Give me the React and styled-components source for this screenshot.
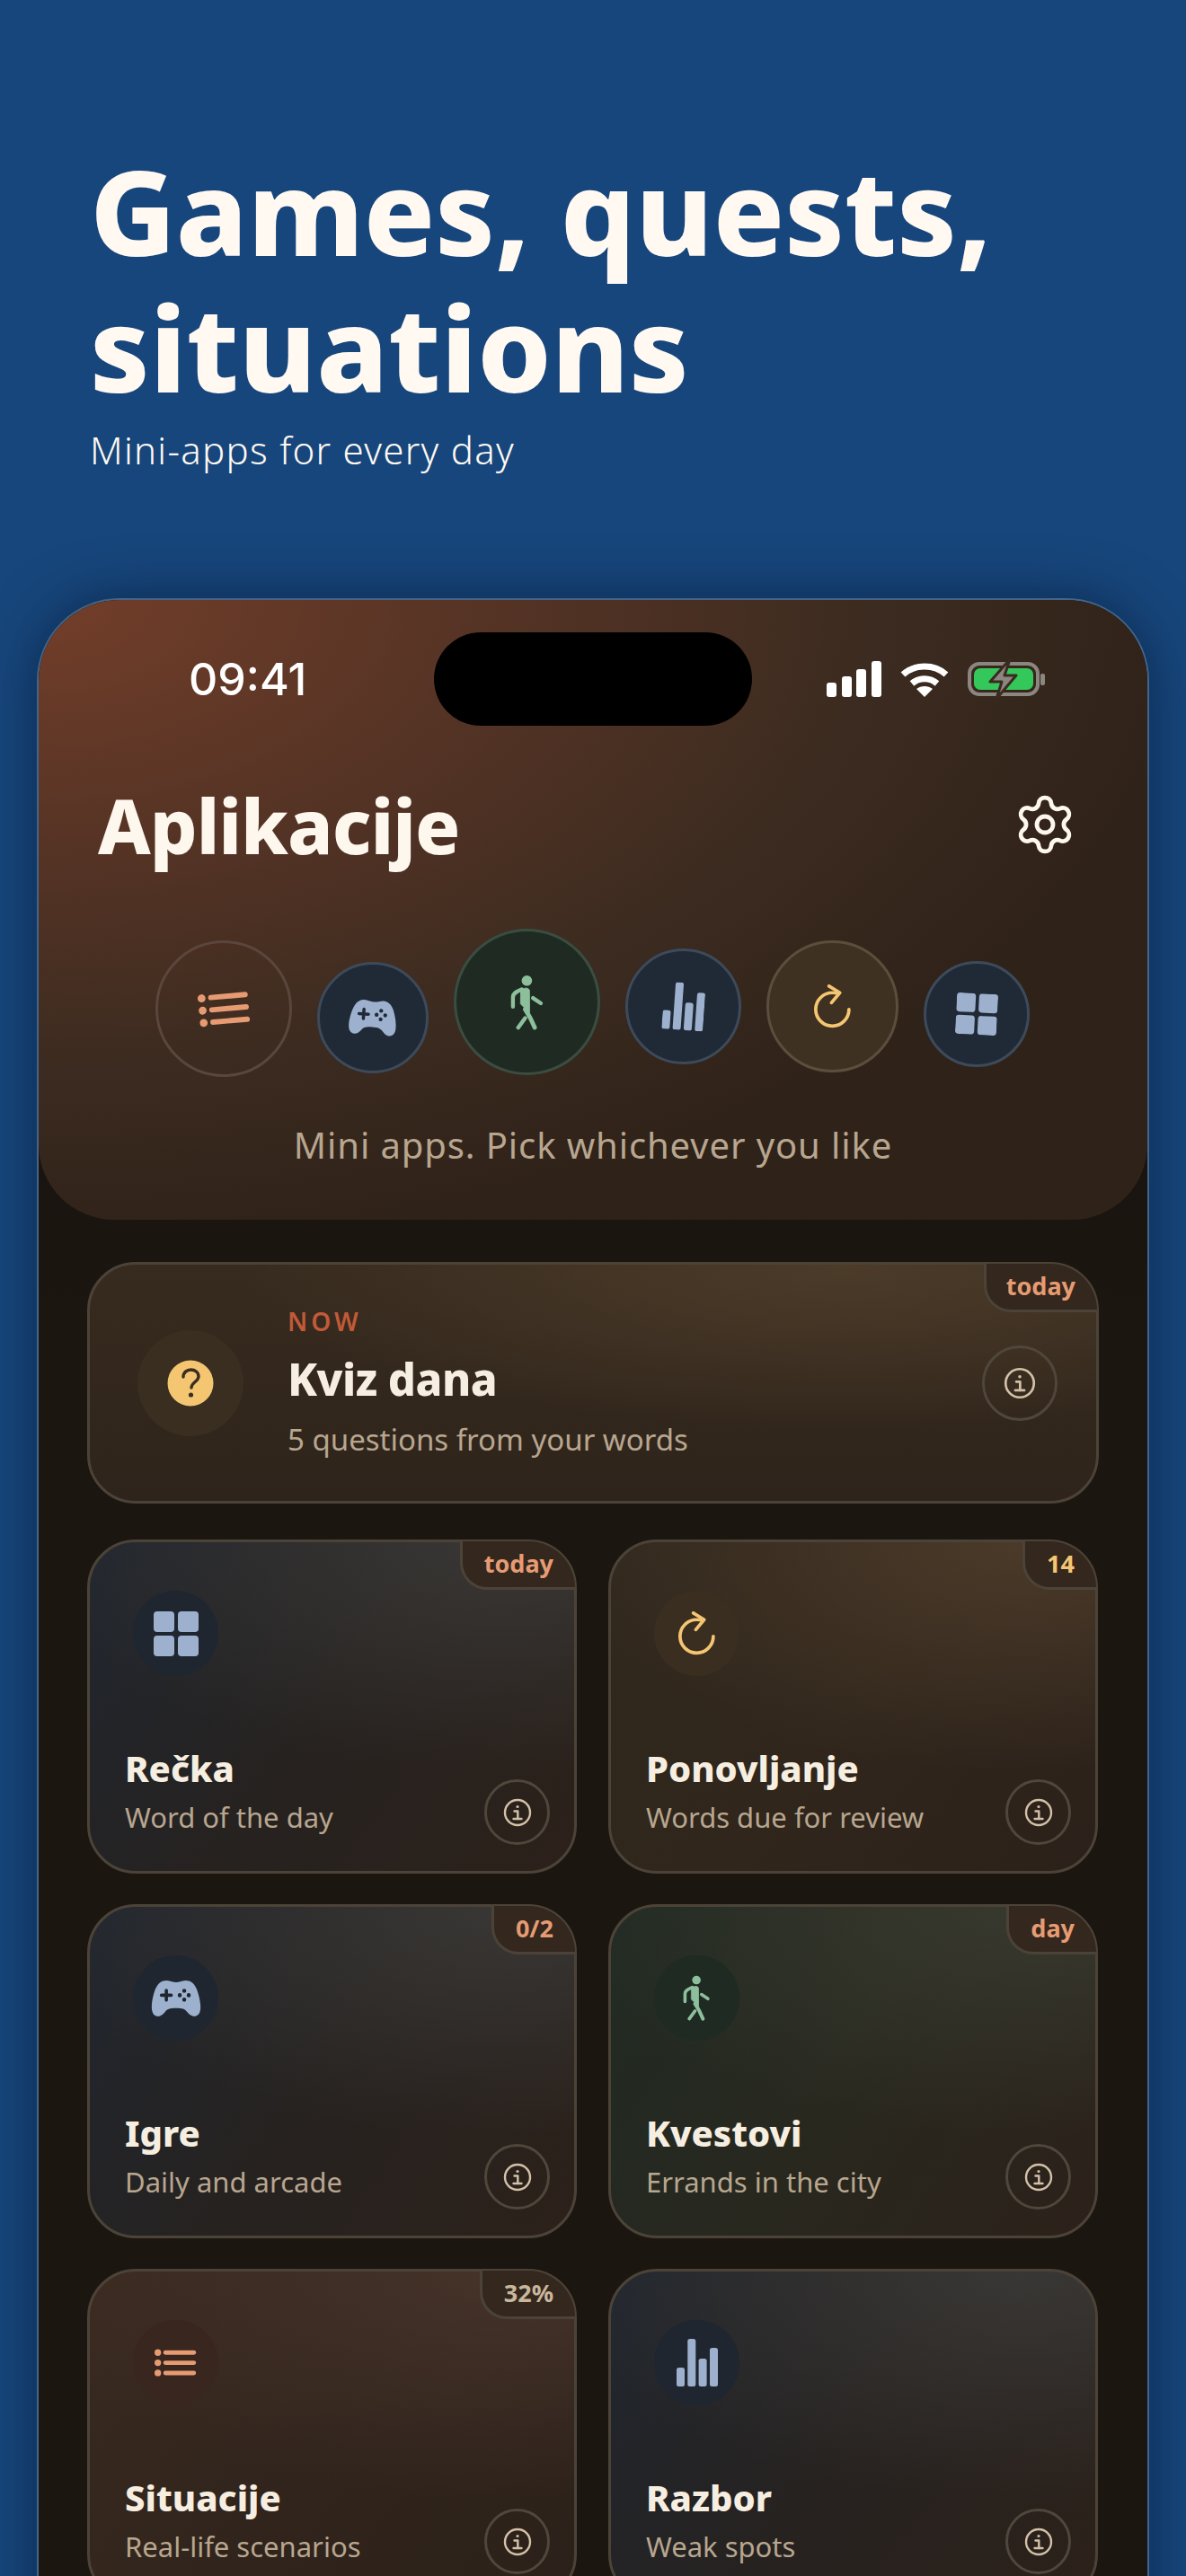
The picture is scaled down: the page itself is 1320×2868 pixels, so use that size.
import React from 'react';
import styled, { createGlobalStyle } from 'styled-components';
import { Settings } from 'lucide-react';
import { IoGameController } from 'react-icons/io5';

const FONT = `"Noto Sans", "Open Sans", sans-serif`;

const GlobalStyle = createGlobalStyle`
  * { box-sizing: border-box; }
  html, body { margin: 0; padding: 0; background: #17467c; }
  body { font-family: ${FONT}; }
`;

const tints = {
  blue: { circle: '#202a37', ring: '#3d4a5a', card: '#20262f', mid: '#262220', corner: '#393735', icon: '#9db0cd', soft: '#1f2630' },
  green: { circle: '#1f2b22', ring: '#3a4d41', card: '#1f2a23', mid: '#28281f', corner: '#38392e', icon: '#8dbf9c', soft: '#1f2a23' },
  amber: { circle: '#3e3122', ring: '#5c4e3c', card: '#2f271d', mid: '#30261c', corner: '#4b3a29', icon: '#f5c672', soft: '#3a2e20' },
  peach: { circle: '#3e281f', ring: '#5a463c', card: '#3a2a20', mid: '#30241c', corner: '#46332a', icon: '#e69b72', soft: '#38261f' },
};

const Page = styled.div`
  width: 1320px;
  height: 2868px;
  overflow: hidden;
  background: #17467c;
`;

const Hero = styled.header`
  height: 666px;
  padding: 158px 100px 0;
`;

const Headline = styled.h1`
  margin: 0;
  font-size: 131px;
  line-height: 152px;
  font-weight: 800;
  color: #fff9f2;
`;

const Tagline = styled.p`
  margin: 14px 0 0;
  font-size: 42px;
  line-height: 50px;
  font-weight: 300;
  letter-spacing: 1.3px;
  color: #fff9f2;
`;

const Phone = styled.div`
  width: 1238px;
  min-height: 2300px;
  margin: 0 auto;
  border: 2px solid #456488;
  border-radius: 92px 92px 0 0;
  background: linear-gradient(180deg, #120e0b 0%, #1c1611 35%, #1c1611 100%);
  box-shadow: 0 0 60px rgba(4, 16, 36, .5);
  overflow: hidden;
`;

const Top = styled.section`
  height: 690px;
  border-radius: 0 0 84px 84px;
  background:
    radial-gradient(ellipse 105% 105% at 0 0, #733e2a 0%, #573425 36%, #3c2b20 72%, #2f2219 100%);
  padding: 36px 0 0;
`;

const StatusBar = styled.div`
  height: 104px;
  padding-left: 167px;
  display: flex;
  align-items: center;
`;

const Time = styled.span`
  width: 273px;
  font-family: Inter, sans-serif;
  font-size: 50px;
  font-weight: 500;
  color: #fff;
`;

const Island = styled.div`
  width: 354px;
  height: 104px;
  border-radius: 52px;
  background: #000;
`;

const StatusIcons = styled.div`
  margin-left: 83px;
  display: flex;
  align-items: center;
  gap: 21px;
`;

const TitleRow = styled.div`
  margin-top: 50px;
  padding: 0 78px 0 66px;
  height: 120px;
  display: flex;
  align-items: center;
  justify-content: space-between;
`;

const Title = styled.h2`
  margin: 0;
  font-size: 83px;
  font-weight: 800;
  letter-spacing: -1px;
  color: #fdf7ee;
`;

const Orbits = styled.div`
  margin-top: 56px;
  padding-left: 130px;
  display: flex;
  align-items: flex-start;
  gap: 28px;
`;

const Orbit = styled.div`
  flex: none;
  width: ${({ $size }) => $size}px;
  height: ${({ $size }) => $size}px;
  margin-top: ${({ $drop }) => $drop}px;
  border-radius: 50%;
  border: 3px solid ${({ $tint }) => tints[$tint].ring};
  background: ${({ $tint, $clear }) => ($clear ? 'transparent' : tints[$tint].circle)};
  color: ${({ $tint }) => tints[$tint].icon};
  display: flex;
  align-items: center;
  justify-content: center;
  svg { transform: rotate(${({ $tilt }) => $tilt || 0}deg); }
`;

const Hint = styled.p`
  margin: 51px 0 0;
  text-align: center;
  font-size: 40px;
  line-height: 50px;
  letter-spacing: .9px;
  color: #b8a68f;
`;

const Body = styled.main`
  padding: 47px 54px 0;
  display: flex;
  flex-direction: column;
  gap: 40px;
`;

const Panel = styled.article`
  position: relative;
  height: 269px;
  border-radius: 54px;
  border: 3px solid #4c4338;
  background:
    radial-gradient(ellipse 60% 70% at 75% 0, #4c3b29 0%, transparent 100%),
    linear-gradient(180deg, #372b1f 0%, #2f241b 100%);
  padding: 0 43px 0 53px;
  display: flex;
  align-items: center;
`;

const PanelIcon = styled.div`
  flex: none;
  width: 118px;
  height: 118px;
  border-radius: 50%;
  background: #3a2e20;
  display: flex;
  align-items: center;
  justify-content: center;
`;

const PanelText = styled.div`
  margin-left: 49px;
  flex: 1;
`;

const Eyebrow = styled.div`
  font-size: 28px;
  line-height: 34px;
  font-weight: 600;
  letter-spacing: 4px;
  color: #c25a38;
`;

const PanelTitle = styled.div`
  margin-top: 17px;
  font-size: 49px;
  line-height: 60px;
  font-weight: 800;
  letter-spacing: -.5px;
  color: #f6eee0;
`;

const PanelSub = styled.div`
  margin-top: 16px;
  font-size: 33px;
  line-height: 44px;
  color: #b8a68f;
`;

const Tag = styled.span`
  position: absolute;
  top: -1px;
  right: -1px;
  height: 54px;
  padding: 0 24px 0 ${({ $pad }) => $pad || 24}px;
  border-left: 3px solid #4c4338;
  border-bottom: 3px solid #4c4338;
  border-radius: 0 52px 0 30px;
  background: #33271e;
  font-size: 27px;
  font-weight: 700;
  line-height: 50px;
  color: ${({ $color }) => $color || '#e69b72'};
`;

const Grid = styled.div`
  display: grid;
  grid-template-columns: 545px 545px;
  column-gap: 35px;
  row-gap: 34px;
`;

const Tile = styled.article`
  position: relative;
  height: 372px;
  border-radius: 54px;
  border: 3px solid #4c4338;
  padding: 54px 27px 29px 39px;
  background:
    radial-gradient(ellipse 100% 70% at 85% 0, ${({ $tint }) => tints[$tint].corner} 0%, transparent 100%),
    linear-gradient(125deg, ${({ $tint }) => tints[$tint].card} 0%, ${({ $tint }) => tints[$tint].mid} 48%, #2c211a 100%);
  display: flex;
  flex-direction: column;
`;

const TileIcon = styled.div`
  width: 95px;
  height: 95px;
  margin-left: 9px;
  border-radius: 50%;
  background: ${({ $tint }) => tints[$tint].soft};
  color: ${({ $tint }) => tints[$tint].icon};
  display: flex;
  align-items: center;
  justify-content: center;
`;

const TileFoot = styled.div`
  margin-top: auto;
  display: flex;
  align-items: flex-end;
  justify-content: space-between;
`;

const TileTitle = styled.div`
  font-size: 40px;
  line-height: 50px;
  font-weight: 800;
  color: #f6eee0;
`;

const TileSub = styled.div`
  margin: 8px 0 10px;
  font-size: 31px;
  line-height: 42px;
  color: #b8a68f;
`;

const InfoButton = styled.div`
  flex: none;
  width: ${({ $size }) => $size || 73}px;
  height: ${({ $size }) => $size || 73}px;
  border-radius: 50%;
  border: 3px solid #4f463c;
  color: #d2c1a8;
  display: flex;
  align-items: center;
  justify-content: center;
`;

function SignalIcon() {
  return (
    <svg width="61" height="40" viewBox="0 0 61 40" fill="#fff">
      <rect x="0" y="24" width="11" height="16" rx="3" />
      <rect x="17" y="17" width="11" height="23" rx="3" />
      <rect x="33" y="9" width="11" height="31" rx="3" />
      <rect x="50" y="0" width="11" height="40" rx="3" />
    </svg>
  );
}

function WifiIcon() {
  return (
    <svg width="54" height="40" viewBox="0 0 54 40" fill="none" stroke="#fff" strokeWidth="7">
      <path d="M3 15C16 3 38 3 51 15" />
      <path d="M13 25C21 18 33 18 41 25" />
      <path d="M18 31L27 40L36 31C31 27 23 27 18 31Z" fill="#fff" stroke="none" />
    </svg>
  );
}

function BatteryIcon() {
  return (
    <svg width="88" height="44" viewBox="0 0 88 44">
      <rect x="2" y="5" width="76" height="34" rx="11" fill="none" stroke="#8c8680" strokeWidth="4" />
      <rect x="7" y="10" width="66" height="24" rx="7" fill="#34c759" />
      <rect x="81" y="16" width="5" height="13" rx="2" fill="#8c8680" />
      <path d="M47 0L25 25H38L32 44L54 18H41Z" fill="#8c8680" stroke="#3a2a20" strokeWidth="3" strokeLinejoin="round" />
    </svg>
  );
}

function ListIcon({ size = 57 }) {
  return (
    <svg width={size} height={size * 41 / 58} viewBox="0 0 58 41" fill="currentColor">
      <circle cx="4.5" cy="6.5" r="4.5" />
      <circle cx="4.5" cy="20.5" r="4.5" />
      <circle cx="4.5" cy="34.5" r="4.5" />
      <rect x="12" y="3.5" width="45" height="6" rx="3" />
      <rect x="12" y="17.5" width="45" height="6" rx="3" />
      <rect x="12" y="31.5" width="45" height="6" rx="3" />
    </svg>
  );
}

function BarsIcon({ size = 53 }) {
  return (
    <svg width={size * 46 / 53} height={size} viewBox="0 0 46 53" fill="currentColor">
      <rect x="0" y="32" width="9" height="21" rx="2.5" />
      <rect x="12.3" y="0" width="9" height="53" rx="2.5" />
      <rect x="24.6" y="22" width="9" height="31" rx="2.5" />
      <rect x="37" y="10" width="9" height="43" rx="2.5" />
    </svg>
  );
}

function GridIcon({ size = 50 }) {
  return (
    <svg width={size} height={size} viewBox="0 0 50 50" fill="currentColor">
      <rect x="0" y="0" width="23" height="23" rx="4" />
      <rect x="27" y="0" width="23" height="23" rx="4" />
      <rect x="0" y="27" width="23" height="23" rx="4" />
      <rect x="27" y="27" width="23" height="23" rx="4" />
    </svg>
  );
}

function WalkIcon({ size = 62 }) {
  return (
    <svg width={size * 38 / 64} height={size} viewBox="0 0 38 64" fill="none" stroke="currentColor" strokeLinecap="round" strokeLinejoin="round">
      <circle cx="19" cy="7" r="6" fill="currentColor" stroke="none" />
      <path d="M12 19C13 16 18 15 20 16C22 17 22 18 22 20V44L12 34Z" fill="currentColor" strokeWidth="1" />
      <path d="M13 17C6 20 3 22 3 26V37" strokeWidth="4.5" />
      <path d="M26 27L35 33" strokeWidth="4.5" />
      <path d="M17 40L23 50L28 61" strokeWidth="5" />
      <path d="M17 50L9 61" strokeWidth="4.5" />
    </svg>
  );
}

function RefreshIcon({ size = 52 }) {
  return (
    <svg width={size * 44 / 54} height={size} viewBox="0 0 44 54" fill="none" stroke="currentColor" strokeWidth="4" strokeLinecap="round" strokeLinejoin="round">
      <path d="M29 10.5C27 10.2 24.5 10 22 10A20 20 0 1 0 42 30" />
      <path d="M18 2L31 10L21 22" />
    </svg>
  );
}

function InfoIcon({ size = 32 }) {
  return (
    <svg width={size} height={size} viewBox="0 0 32 32" fill="none" stroke="currentColor" strokeWidth="2.4" strokeLinecap="round" strokeLinejoin="round">
      <circle cx="16" cy="16" r="14" />
      <circle cx="16" cy="9.5" r="1.6" fill="currentColor" stroke="none" />
      <path d="M12.5 14.5H16.3V23" />
      <path d="M11.5 23H20.5" />
    </svg>
  );
}

function QuestionIcon() {
  return (
    <svg width="52" height="52" viewBox="0 0 52 52">
      <circle cx="26" cy="26" r="25.5" fill="#f5c672" />
      <path d="M18 19C18 14 22 11 26.5 11C31 11 35 14 35 18.5C35 24 27 25 27 31" fill="none" stroke="#3a2e20" strokeWidth="3.4" strokeLinecap="round" />
      <circle cx="26.5" cy="39" r="2.6" fill="#3a2e20" />
    </svg>
  );
}

const TILES = [
  { name: 'Rečka', sub: 'Word of the day', tag: 'today', tint: 'blue', Icon: GridIcon, size: 50 },
  { name: 'Ponovljanje', sub: 'Words due for review', tag: '14', tagColor: '#f5c672', tint: 'amber', Icon: RefreshIcon, size: 50 },
  { name: 'Igre', sub: 'Daily and arcade', tag: '0/2', tint: 'blue', Icon: IoGameController, size: 58 },
  { name: 'Kvestovi', sub: 'Errands in the city', tag: 'day', tint: 'green', Icon: WalkIcon, size: 51 },
  { name: 'Situacije', sub: 'Real-life scenarios', tag: '32%', tagColor: '#c9b69c', tint: 'peach', Icon: ListIcon, size: 47 },
  { name: 'Razbor', sub: 'Weak spots', tint: 'blue', Icon: BarsIcon, size: 53 },
];

export default function App() {
  return (
    <Page>
      <GlobalStyle />
      <Hero>
        <Headline>Games, quests, situations</Headline>
        <Tagline>Mini-apps for every day</Tagline>
      </Hero>
      <Phone>
        <Top>
          <StatusBar>
            <Time>09:41</Time>
            <Island />
            <StatusIcons>
              <SignalIcon />
              <WifiIcon />
              <BatteryIcon />
            </StatusIcons>
          </StatusBar>
          <TitleRow>
            <Title>Aplikacije</Title>
            <Settings size={72} strokeWidth={1.6} color="#fdf7ee" />
          </TitleRow>
          <Orbits>
            <Orbit $size={152} $drop={13} $tint="peach" $clear $tilt={-5}><ListIcon size={57} /></Orbit>
            <Orbit $size={124} $drop={37} $tint="blue" $tilt={4}><IoGameController size={56} /></Orbit>
            <Orbit $size={163} $drop={0} $tint="green"><WalkIcon size={62} /></Orbit>
            <Orbit $size={129} $drop={22} $tint="blue" $tilt={4}><BarsIcon size={53} /></Orbit>
            <Orbit $size={147} $drop={13} $tint="amber"><RefreshIcon size={50} /></Orbit>
            <Orbit $size={118} $drop={36} $tint="blue" $tilt={3}><GridIcon size={46} /></Orbit>
          </Orbits>
          <Hint>Mini apps. Pick whichever you like</Hint>
        </Top>
        <Body>
          <Panel>
            <Tag $pad={22}>today</Tag>
            <PanelIcon><QuestionIcon /></PanelIcon>
            <PanelText>
              <Eyebrow>NOW</Eyebrow>
              <PanelTitle>Kviz dana</PanelTitle>
              <PanelSub>5 questions from your words</PanelSub>
            </PanelText>
            <InfoButton $size={84}><InfoIcon size={36} /></InfoButton>
          </Panel>
          <Grid>
            {TILES.map(({ name, sub, tag, tagColor, tint, Icon, size }) => (
              <Tile key={name} $tint={tint}>
                {tag && <Tag $color={tagColor}>{tag}</Tag>}
                <TileIcon $tint={tint}><Icon size={size} /></TileIcon>
                <TileFoot>
                  <div>
                    <TileTitle>{name}</TileTitle>
                    <TileSub>{sub}</TileSub>
                  </div>
                  <InfoButton><InfoIcon /></InfoButton>
                </TileFoot>
              </Tile>
            ))}
          </Grid>
        </Body>
      </Phone>
    </Page>
  );
}
